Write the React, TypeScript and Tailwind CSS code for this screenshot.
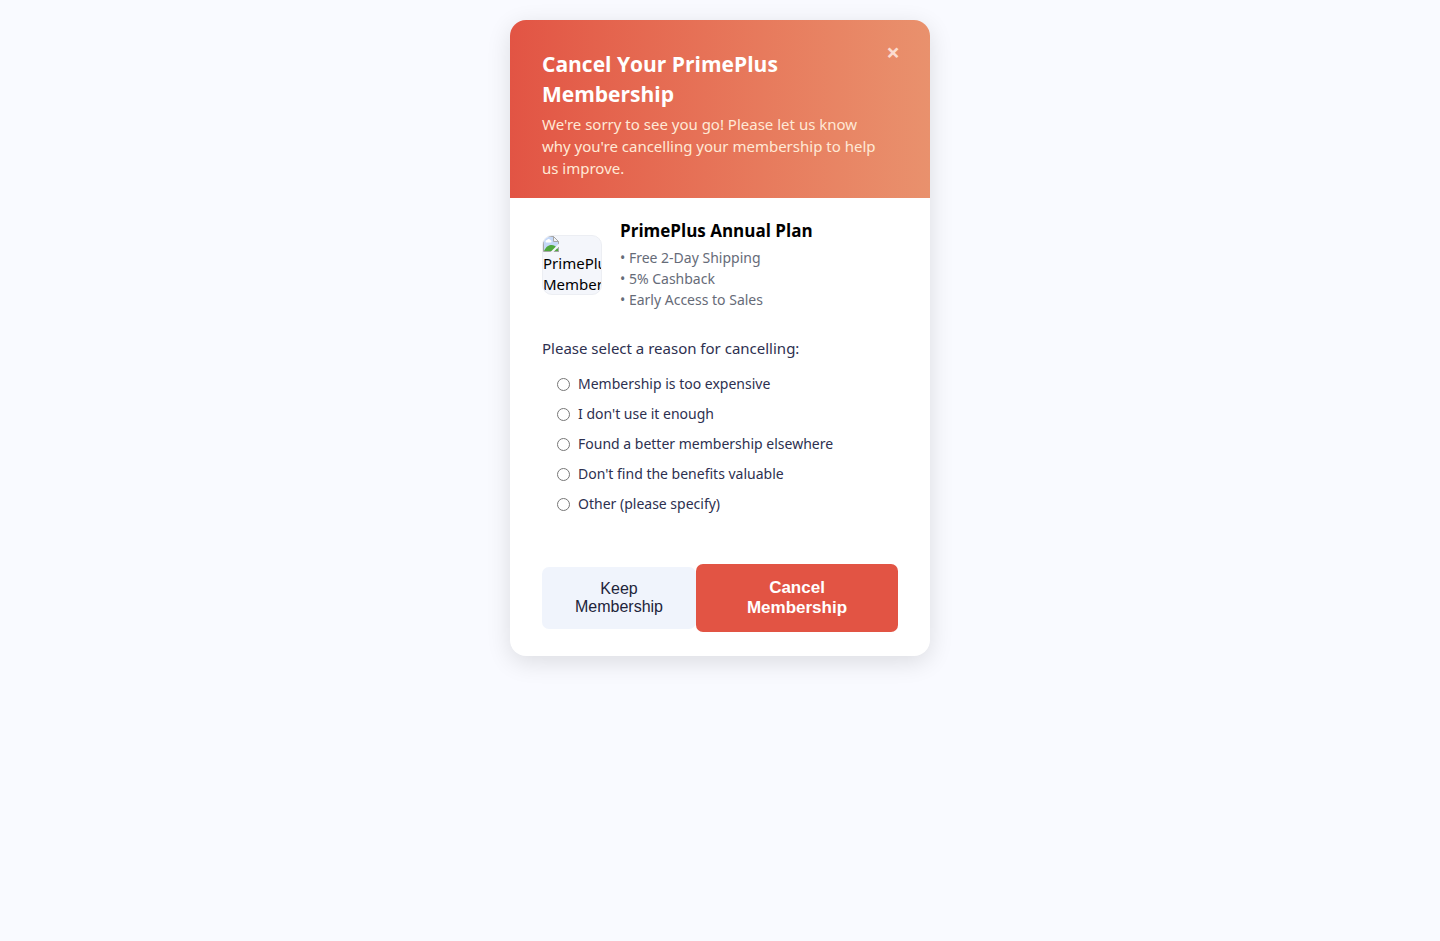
const benefits = ['Free 2-Day Shipping', '5% Cashback', 'Early Access to Sales'];

const reasons = [
  { id: 'expensive', label: 'Membership is too expensive' },
  { id: 'unused', label: "I don't use it enough" },
  { id: 'better', label: 'Found a better membership elsewhere' },
  { id: 'value', label: "Don't find the benefits valuable" },
  { id: 'other', label: 'Other (please specify)' },
];

function PlaceholderIcon() {
  return (
    <svg width="16" height="16" viewBox="0 0 16 16" aria-hidden="true" className="block">
      <path d="M0.5 0.5H10.5L15.5 5.5V15.5H0.5Z" fill="#c5d8f7" stroke="#a6a6a6" />
      <path d="M10.5 0.5V5.5H15.5Z" fill="#f4f4f4" stroke="#a6a6a6" />
      <path d="M3 6.5a1.5 1.5 0 0 1 1-2.6a2 2 0 0 1 3.6 0.4a1.2 1.2 0 0 1 0.4 2.2Z" fill="#fff" />
      <path d="M1 15C3 10.500 6 9 8.500 9C11 9 13 10.500 15 13V15Z" fill="#4fa83d" />
      <path d="M7.500 16L16 7.500V10.500L10.500 16Z" fill="#f4f6fb" />
      <path d="M11.500 15.500H15.500V11.500" fill="none" stroke="#a6a6a6" />
    </svg>
  );
}

function Header() {
  return (
    <header className="flex items-start bg-linear-to-r from-[#e25444] to-[#e9916d] pt-7 pr-7 pb-[19px] pl-8">
      <div className="min-w-0 flex-1">
        <h1 className="pt-px font-['Open_Sans',sans-serif] text-[21px] leading-[30px] font-bold text-white">
          Cancel Your PrimePlus Membership
        </h1>
        <p className="pt-1 pr-3 text-[15px] leading-[22px] text-[#ffe9d6]">
          We're sorry to see you go! Please let us know why you're cancelling your membership to help us improve.
        </p>
      </div>
      <button
        type="button"
        aria-label="Close"
        className="-mt-1.5 -ml-4 flex h-5 w-[18px] shrink-0 items-center justify-center text-2xl leading-5 font-bold text-[#fbdcd0]"
      >
        ×
      </button>
    </header>
  );
}

function Plan() {
  return (
    <section className="flex items-center gap-[18px]">
      <div
        role="img"
        aria-label="PrimePlus Membership"
        className="size-[60px] shrink-0 overflow-hidden rounded-[10px] border border-[#eceef3] bg-[#f4f6fb] text-[15px] leading-[21px] text-black"
      >
        <PlaceholderIcon />
        <div className="pt-px">
          <span className="block overflow-hidden">PrimePlus</span>
          <span className="block overflow-hidden">Membership</span>
        </div>
      </div>
      <div>
        <h2 className="font-['Open_Sans',sans-serif] text-[17px] leading-6 font-bold text-black">
          PrimePlus Annual Plan
        </h2>
        <ul className="pt-1 text-sm leading-[21px] text-[#666b78]">
          {benefits.map((benefit) => (
            <li key={benefit}>• {benefit}</li>
          ))}
        </ul>
      </div>
    </section>
  );
}

function Reasons() {
  return (
    <fieldset className="pt-[27px] text-[#2d3050]">
      <legend className="contents">
        <span className="block text-[15px] leading-[22px]">Please select a reason for cancelling:</span>
      </legend>
      <div className="flex flex-col gap-2 pt-3.5 pl-[15px]">
        {reasons.map(({ id, label }) => (
          <label key={id} htmlFor={id} className="flex items-center gap-2 text-sm leading-[22px]">
            <input id={id} type="radio" name="reason" value={id} className="size-[13px]" />
            {label}
          </label>
        ))}
      </div>
    </fieldset>
  );
}

function Actions() {
  return (
    <div className="grid grid-cols-[154fr_202fr] items-center pt-[49px] font-['Liberation_Sans',Arial,sans-serif]">
      <button
        type="button"
        className="rounded-[7px] bg-[#f0f4fc] px-7 py-[13px] text-base leading-[18px] text-[#22243a]"
      >
        Keep Membership
      </button>
      <button
        type="button"
        className="rounded-[7px] bg-[#e25444] px-9 py-3.5 text-[17px] leading-5 font-bold text-white"
      >
        Cancel Membership
      </button>
    </div>
  );
}

export default function App() {
  return (
    <main className="min-h-screen bg-[#f9faff] px-4 py-5 font-['Noto_Sans','Open_Sans',sans-serif]">
      <div className="mx-auto max-w-[420px] overflow-hidden rounded-2xl bg-white shadow-[0_6px_24px_rgba(0,0,0,0.12)]">
        <Header />
        <div className="px-8 pt-[21px] pb-6">
          <Plan />
          <Reasons />
          <Actions />
        </div>
      </div>
    </main>
  );
}
